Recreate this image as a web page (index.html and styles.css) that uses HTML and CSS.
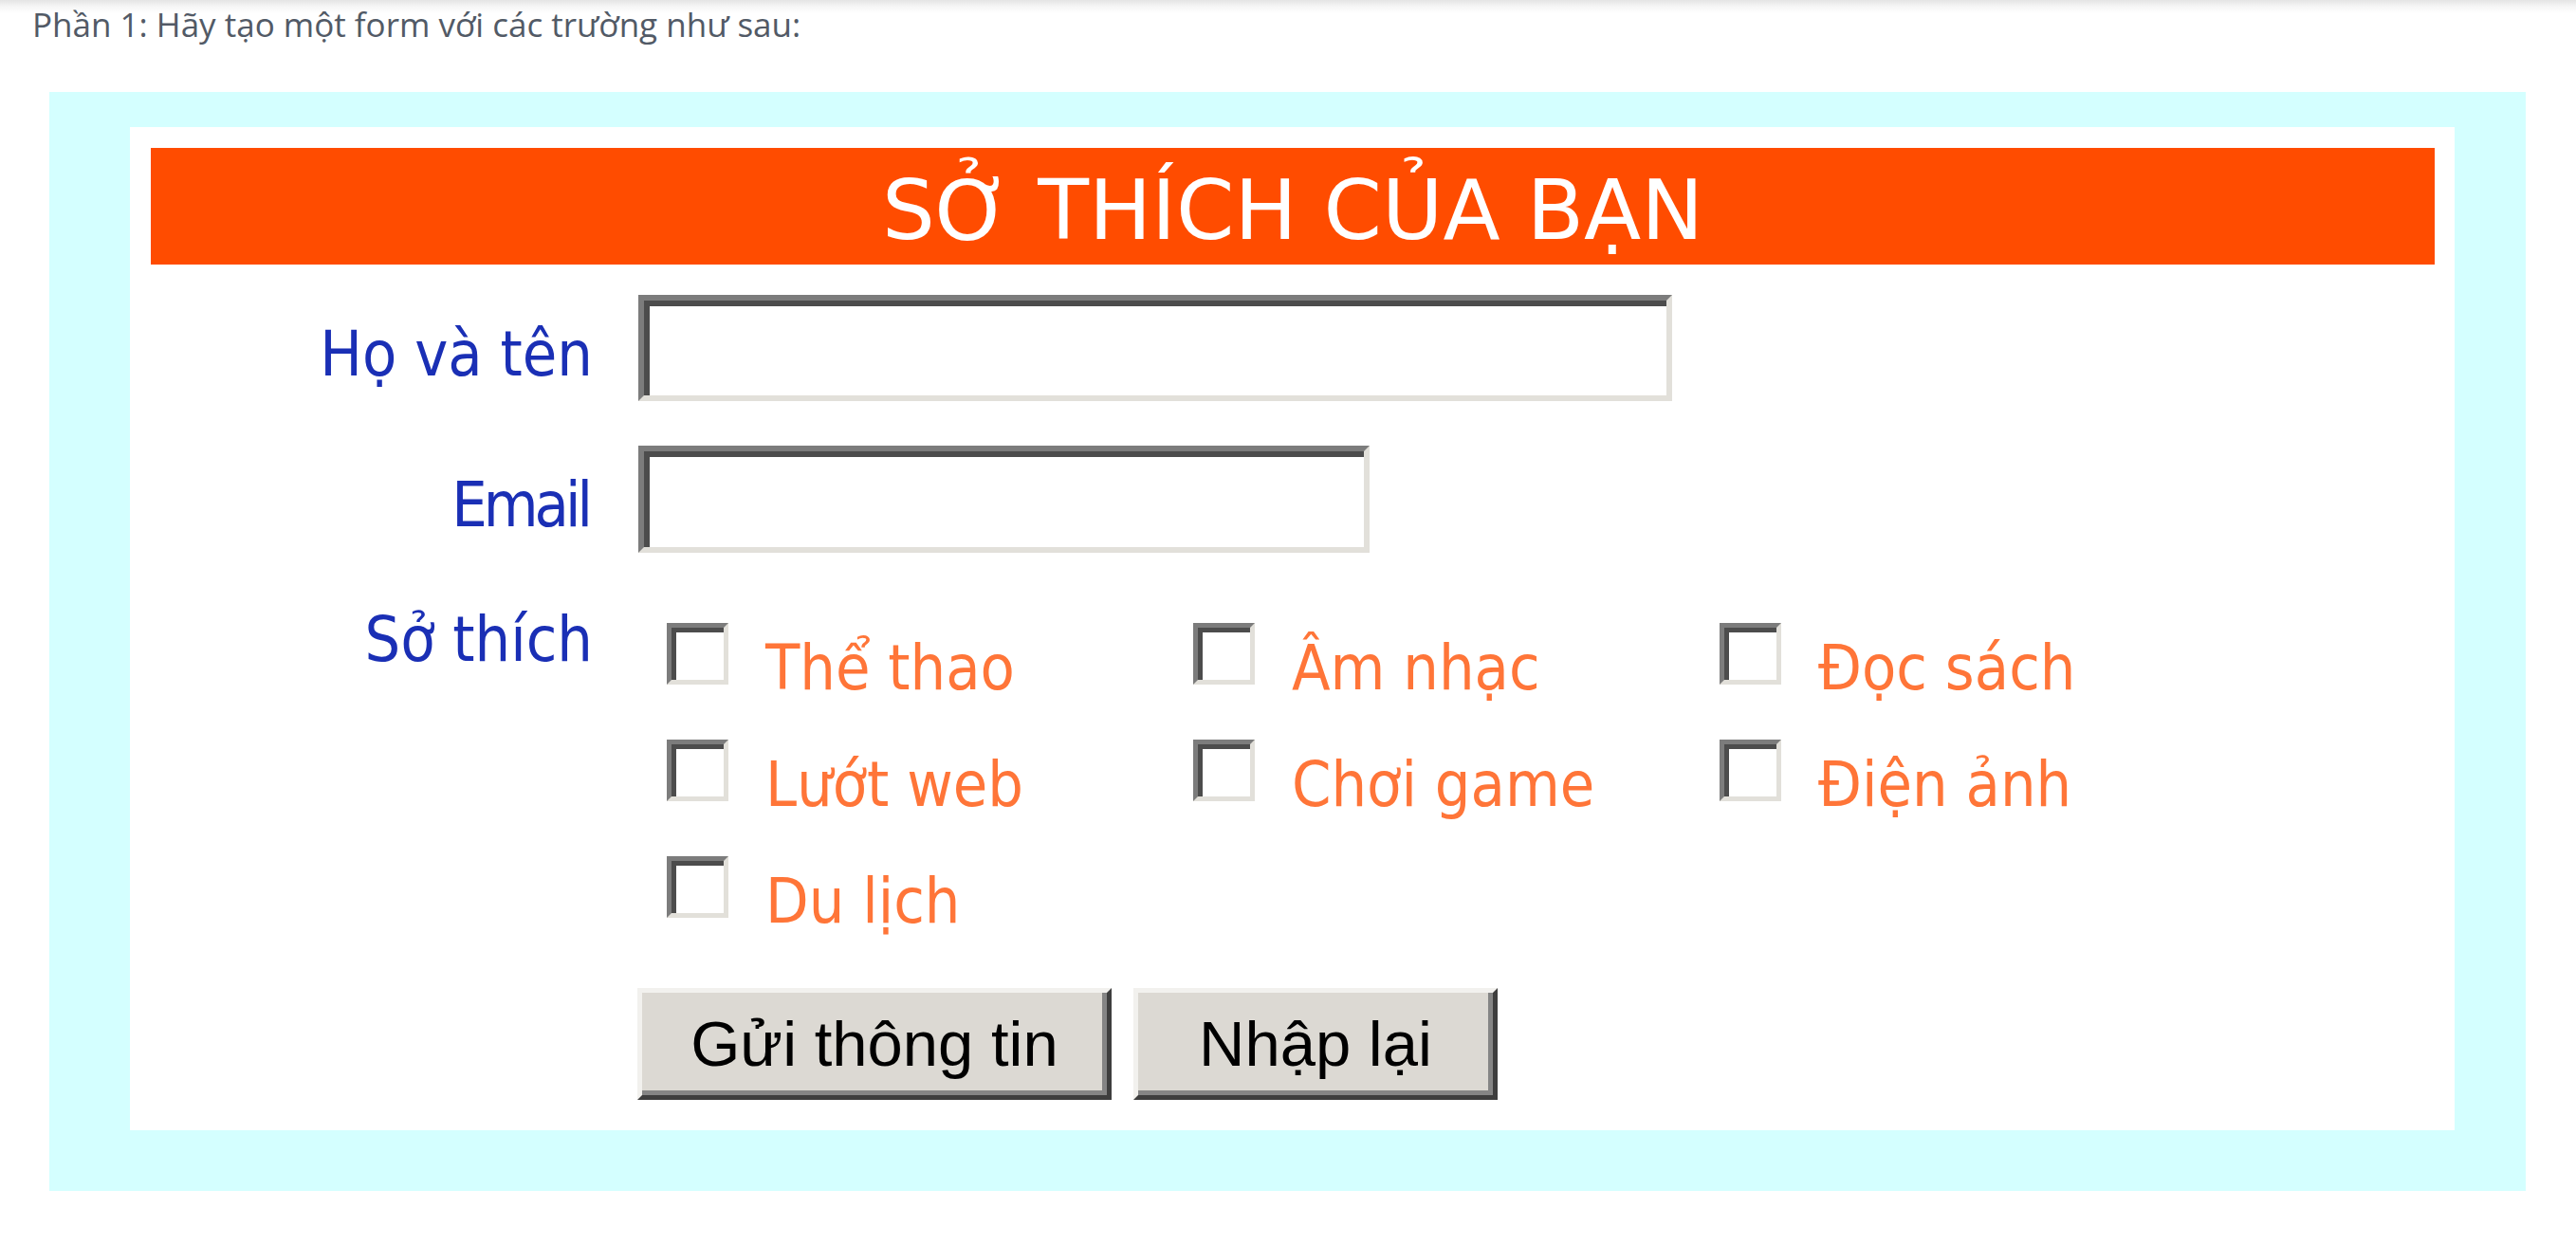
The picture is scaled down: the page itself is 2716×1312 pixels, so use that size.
FILE: index.html
```html
<!DOCTYPE html>
<html lang="vi">
<head>
<meta charset="utf-8">
<title>Sở thích của bạn</title>
<link rel="stylesheet" href="styles.css">
</head>
<body>
<p class="intro">Phần 1: Hãy tạo một form với các trường như sau:</p>
<div class="frame">
  <form class="card">
    <div class="title">SỞ THÍCH CỦA BẠN</div>
    <div class="grid">
      <label class="lbl">Họ và tên</label>
      <div class="field"><input class="txt txt-name" type="text"></div>
      <label class="lbl lbl-mail">Email</label>
      <div class="field"><input class="txt txt-mail" type="text"></div>
      <label class="lbl lbl-hobby">Sở thích</label>
      <div class="hobbies">
        <label class="opt"><input class="chk" type="checkbox"><span>Thể thao</span></label>
        <label class="opt"><input class="chk" type="checkbox"><span>Âm nhạc</span></label>
        <label class="opt"><input class="chk" type="checkbox"><span>Đọc sách</span></label>
        <label class="opt"><input class="chk" type="checkbox"><span>Lướt web</span></label>
        <label class="opt"><input class="chk" type="checkbox"><span>Chơi game</span></label>
        <label class="opt"><input class="chk" type="checkbox"><span>Điện ảnh</span></label>
        <label class="opt"><input class="chk" type="checkbox"><span>Du lịch</span></label>
      </div>
      <div class="spacer"></div>
      <div class="actions">
        <button class="btn btn-send" type="button">Gửi thông tin</button>
        <button class="btn btn-reset" type="reset">Nhập lại</button>
      </div>
    </div>
  </form>
</div>
</body>
</html>
```

FILE: styles.css
```css
html, body {
  margin: 0;
  padding: 0;
}
body {
  background: #fff linear-gradient(to bottom, #e4e4e4 0, #f6f6f6 7px, #ffffff 14px) top left / 100% 14px no-repeat;
  font-family: "Open Sans", sans-serif;
}
.intro {
  margin: 2px 0 0 34px;
  font-size: 35px;
  line-height: 48px;
  color: #525a66;
}
.frame {
  margin: 47px 0 0 52px;
  width: 2611px;
  box-sizing: border-box;
  background: #d4ffff;
  padding: 37px 75px 64px 85px;
}
.card {
  display: block;
  margin: 0;
  background: #fff;
  padding: 22px 21px 32px 22px;
}
.title {
  height: 123px;
  box-sizing: border-box;
  padding-top: 8px;
  line-height: 115px;
  background: #ff4c00;
  color: #fff;
  text-align: center;
  font-family: "DejaVu Sans", sans-serif;
  font-size: 88px;
  white-space: nowrap;
}
.grid {
  margin-top: 32px;
  display: grid;
  grid-template-columns: 466px 1fr;
  column-gap: 48px;
  font-family: "DejaVu Sans Condensed", "DejaVu Sans", sans-serif;
  font-size: 66px;
  line-height: 76px;
}
.lbl {
  color: #1a2fb5;
  text-align: right;
  padding-top: 25px;
  white-space: nowrap;
}
.lbl-mail {
  margin-top: 47px;
  letter-spacing: -4px;
  padding-right: 4px;
}
.lbl-hobby {
  padding-top: 0;
  margin-top: 54px;
}
.field {
  display: flex;
}
.grid > .field + .lbl + .field {
  margin-top: 47px;
}
.txt {
  display: block;
  margin: 0;
  padding: 0;
  height: 112px;
  box-sizing: border-box;
  border-style: solid;
  border-width: 6px;
  border-color: #7c7c7c #e2e0da #e2e0da #7c7c7c;
  box-shadow: inset 6px 6px 0 #4c4c4c;
  background: #fff;
  outline: none;
}
.txt-name { width: 1090px; }
.txt-mail { width: 771px; height: 113px; }
.hobbies {
  margin-top: 54px;
  padding: 20px 0 0 30px;
  display: grid;
  grid-template-columns: repeat(3, 555px);
  grid-auto-rows: 86px;
  row-gap: 37px;
}
.opt {
  display: flex;
  align-items: flex-start;
  color: #ff7538;
  white-space: nowrap;
}
.chk {
  -webkit-appearance: none;
  appearance: none;
  margin: 0 39px 0 0;
  width: 65px;
  height: 65px;
  flex: none;
  box-sizing: border-box;
  border-style: solid;
  border-width: 5px;
  border-color: #7c7c7c #e2e0da #e2e0da #7c7c7c;
  box-shadow: inset 5px 5px 0 #4c4c4c;
  background: #fff;
  outline: none;
}
.opt span {
  margin-top: 10px;
}
.spacer {
  grid-column: 1;
}
.actions {
  margin-top: 53px;
  display: flex;
  gap: 23px;
  margin-left: -1px;
}
.btn {
  margin: 0;
  padding: 0;
  height: 118px;
  box-sizing: border-box;
  background: #dcd9d3;
  border-style: solid;
  border-width: 5px;
  border-color: #f2f1ee #3e3e3e #3e3e3e #f2f1ee;
  box-shadow: inset -5px -5px 0 #858585;
  font-family: "Liberation Sans", Arial, sans-serif;
  font-size: 67px;
  line-height: 76px;
  color: #000;
  white-space: nowrap;
}
.btn-send { width: 500px; }
.btn-reset { width: 384px; }
```
